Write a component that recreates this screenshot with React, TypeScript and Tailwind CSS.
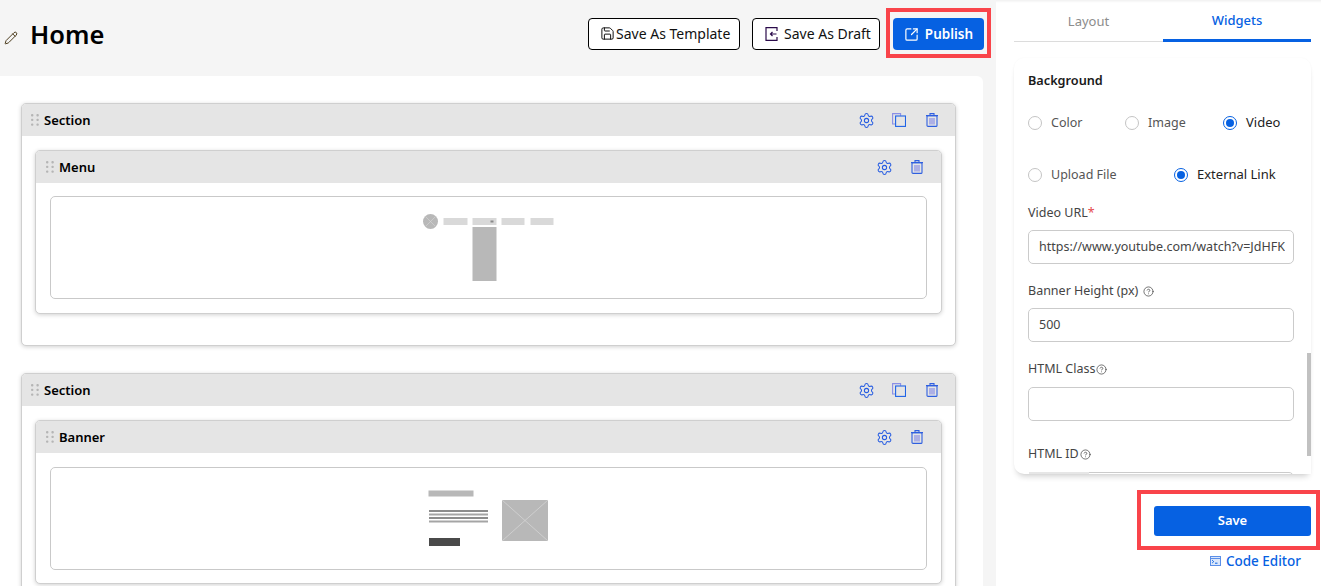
import type { ReactNode } from "react";
import { CircleHelp, Pencil, Save, Settings, SquareArrowOutUpRight } from "lucide-react";

function DragHandle() {
  return (
    <svg viewBox="0 0 8 12" className="h-3 w-2 shrink-0" fill="#b5b5b5">
      <rect x="0" y="0" width="2.4" height="2.4" rx="1" />
      <rect x="5.4" y="0" width="2.4" height="2.4" rx="1" />
      <rect x="0" y="4.7" width="2.4" height="2.4" rx="1" />
      <rect x="5.4" y="4.7" width="2.4" height="2.4" rx="1" />
      <rect x="0" y="9.4" width="2.4" height="2.4" rx="1" />
      <rect x="5.4" y="9.4" width="2.4" height="2.4" rx="1" />
    </svg>
  );
}

function TrashIcon() {
  return (
    <svg viewBox="0 0 12 14" className="h-[14px] w-[12px]" fill="none" stroke="#2f5fe0" strokeWidth="1.1">
      <path d="M0 2.6h12M4 2.4V.6h4v1.8" />
      <rect x="1" y="2.6" width="10" height="10.8" rx="1" />
      <path d="M4 5v6.5M6 5v6.5M8 5v6.5" stroke="#7f84e6" />
    </svg>
  );
}

function CopyIcon() {
  return (
    <svg viewBox="0 0 14 14" className="h-[14px] w-[14px]" fill="none">
      <path d="M3 11H.6V.6h8v2.2" stroke="#8a8fe6" strokeWidth="1.1" />
      <rect x="3.6" y="3" width="9.9" height="10.4" stroke="#1f63e6" strokeWidth="1.1" />
    </svg>
  );
}

function DraftIcon() {
  return (
    <svg viewBox="0 0 13 14" className="h-[14px] w-[13px]" fill="none" stroke="#2a0a4a" strokeWidth="1.2">
      <path d="M12 4V.7H1v12.6h11V10" />
      <path d="M11.5 7H5.5M7.5 5 5.5 7l2 2" />
    </svg>
  );
}

function CodeIcon() {
  return (
    <svg viewBox="0 0 11 10" className="h-[10px] w-[11px]" fill="none" stroke="#5b8fe8" strokeWidth="1">
      <rect x="0.5" y="0.5" width="10" height="9" fill="#dbe7fb" />
      <path d="M.5 2.5h10" />
      <path d="M2.2 4.2 3.7 5.6 2.2 7M5 7.2h2.5" stroke="#0661e2" />
    </svg>
  );
}

function MenuPlaceholder() {
  return (
    <svg viewBox="0 0 131 67" className="h-[67px] w-[131px]">
      <circle cx="7.5" cy="7.5" r="7.5" fill="#b8b8b8" />
      <path d="M2.5 2.5 12.5 12.5M12.5 2.5 2.5 12.5" stroke="#d8d8d8" strokeWidth="0.6" />
      <rect x="20.5" y="4" width="24" height="7" fill="#d9d9d9" />
      <rect x="49.5" y="4" width="24" height="7" fill="#d9d9d9" />
      <rect x="67.5" y="6.5" width="3" height="2" fill="#8a8a8a" />
      <rect x="78.5" y="4" width="23" height="7" fill="#d9d9d9" />
      <rect x="107.5" y="4" width="23" height="7" fill="#d9d9d9" />
      <rect x="49.5" y="13" width="24" height="54" fill="#b8b8b8" />
    </svg>
  );
}

function BannerPlaceholder() {
  return (
    <svg viewBox="0 0 121 57" className="h-[57px] w-[121px]">
      <rect x="0.5" y="0.5" width="45" height="6" fill="#b8b8b8" />
      <rect x="1" y="20" width="59" height="2" fill="#8c8c8c" />
      <rect x="1" y="23.5" width="59" height="2" fill="#a5a5a5" />
      <rect x="1" y="27" width="59" height="2" fill="#8c8c8c" />
      <rect x="1" y="30.5" width="59" height="2" fill="#a5a5a5" />
      <rect x="1" y="48" width="31" height="8" fill="#4a4a4a" />
      <rect x="74" y="10" width="46" height="41" fill="#b8b8b8" />
      <path d="M74 10 120 51M120 10 74 51" stroke="#d8d8d8" strokeWidth="0.7" />
    </svg>
  );
}

function Card({
  title,
  nested,
  canCopy,
  children,
}: {
  title: string;
  nested?: boolean;
  canCopy?: boolean;
  children: ReactNode;
}) {
  return (
    <div className="overflow-hidden rounded-[5px] border border-[#cfcfcf] bg-white shadow-[0_1px_4px_rgba(0,0,0,0.18)]">
      <div className="flex h-8 items-center bg-[#e5e5e5]">
        <div className={`flex min-w-0 flex-1 items-center gap-[5px] ${nested ? "pl-[10px]" : "pl-[9px]"}`}>
          <DragHandle />
          <span className="pt-[2px] text-[13px] font-semibold text-black">{title}</span>
        </div>
        <div className={`flex items-center ${nested ? "pr-[18px]" : "pr-[17px]"}`}>
          <Settings className={`h-[17px] w-[17px] text-[#2a5fe2] ${nested ? "mr-[18px]" : "mr-[17px]"}`} strokeWidth={1.5} />
          {canCopy ? (
            <span className="mr-5">
              <CopyIcon />
            </span>
          ) : null}
          <TrashIcon />
        </div>
      </div>
      {children}
    </div>
  );
}

function Widget({ title, loose, children }: { title: string; loose?: boolean; children: ReactNode }) {
  return (
    <Card title={title} nested>
      <div className={`px-[14px] ${loose ? "pb-[13px] pt-[14px]" : "pb-[14px] pt-[13px]"}`}>
        <div className="flex h-[103px] items-center justify-center rounded-[5px] border border-[#c9c9c9] bg-white">
          {children}
        </div>
      </div>
    </Card>
  );
}

function Radio({ label, checked }: { label: string; checked?: boolean }) {
  return (
    <span className="flex items-center gap-[9px]">
      <span
        className={`flex h-[14px] w-[14px] items-center justify-center rounded-full border bg-white ${
          checked ? "border-[#0661e2]" : "border-[#c4c4c4]"
        }`}
      >
        {checked ? <span className="h-2 w-2 rounded-full bg-[#0661e2]" /> : null}
      </span>
      <span className={checked ? "text-[13px] text-[#222]" : "text-[12.5px] text-[#555]"}>{label}</span>
    </span>
  );
}

function Field({
  label,
  value,
  help,
  gap,
  required,
  wide,
}: {
  label: string;
  value?: string;
  help?: boolean;
  gap?: boolean;
  required?: boolean;
  wide?: boolean;
}) {
  return (
    <div className="h-[78px] pt-px">
      <div className={`flex h-[18px] items-center text-[12.5px] leading-[18px] text-[#444] ${gap ? "gap-[5px]" : "gap-px"}`}>
        <span>
          {label}
          {required ? <span className="text-[#e5484d]">*</span> : null}
        </span>
        {help ? <CircleHelp className="h-[11px] w-[11px] text-[#444]" strokeWidth={1.6} /> : null}
      </div>
      <div className={`flex h-[34px] w-[266px] items-center rounded-[5px] border border-[#cbcbcb] bg-white pl-[10px] pr-2 text-[12.5px] text-[#444] ${wide ? "mt-[9px]" : "mt-2"}`}>
        <span className="block w-full overflow-hidden whitespace-nowrap">{value}</span>
      </div>
    </div>
  );
}

export default function App() {
  return (
    <div className="flex h-[586px] w-[1321px] overflow-hidden bg-white font-['Noto_Sans',sans-serif] shadow-[inset_0_3px_3px_-2px_rgba(0,0,0,0.08)]">
      <main className="h-full w-[996px] shrink-0 bg-[#f5f5f5] pr-[13px]">
        <header className="flex h-[76px] items-center pb-2">
          <Pencil className="ml-1 mt-[7px] h-[14px] w-[14px] text-[#4a3a1a]" strokeWidth={1.7} />
          <h1 className="ml-3 flex-1 pt-px text-[25.5px] font-semibold leading-none text-black">Home</h1>
          <div className="-mr-px flex items-center">
            <button type="button" className="flex h-8 w-[152px] items-center gap-px rounded-[4px] border border-black bg-white pb-px pl-[11px] text-[14px] text-[#111]">
              <Save className="h-[15px] w-[15px]" strokeWidth={1.6} />
              Save As Template
            </button>
            <button type="button" className="ml-3 flex h-8 w-[128px] items-center gap-[6px] rounded-[4px] border border-black bg-white pb-px pl-3 text-[14px] text-[#111]">
              <DraftIcon />
              Save As Draft
            </button>
            <button type="button" className="relative ml-[13px] flex h-8 w-[91px] items-center justify-center gap-[6px] rounded-[4px] bg-[#0661e2] text-[13.5px] font-semibold text-white">
              <SquareArrowOutUpRight className="h-[15px] w-[15px]" strokeWidth={1.9} />
              Publish
              <span className="absolute -bottom-2 -left-[7px] -right-[7px] -top-[10px] border-4 border-[#f9444a]" />
            </button>
          </div>
        </header>
        <div className="h-[510px] overflow-hidden rounded-tr-[6px] bg-white pl-[21px] pr-[27px] pt-[27px]">
          <div className="flex flex-col gap-[27px]">
            <Card title="Section" canCopy>
              <div className="px-[13px] pb-[31px] pt-[14px]">
                <Widget title="Menu">
                  <MenuPlaceholder />
                </Widget>
              </div>
            </Card>
            <Card title="Section" canCopy>
              <div className="px-[13px] pb-8 pt-[14px]">
                <Widget title="Banner" loose>
                  <BannerPlaceholder />
                </Widget>
              </div>
            </Card>
          </div>
        </div>
      </main>

      <aside className="flex h-full flex-1 flex-col pl-[18px] pr-[10px]">
        <div className="flex h-[42px] shrink-0">
          <div className="flex w-[149px] items-center justify-center border-b border-[#dcdcdc] pt-[2px] text-[13px] text-[#8c8c8c]">Layout</div>
          <div className="flex w-[148px] items-center justify-center border-b-[3px] border-[#0661e2] pt-[3px] text-[13px] font-medium text-[#0661e2]">Widgets</div>
        </div>
        <div className="relative mt-4 h-[416px] shrink-0 overflow-hidden rounded-t-[10px] rounded-bl-[10px] bg-white px-[14px] pt-[13px] shadow-[0_5px_6px_-3px_rgba(0,0,0,0.2),0_0_2px_rgba(0,0,0,0.04)]">
          <h2 className="text-[12.7px] font-semibold leading-[18px] text-[#1a1a1a]">Background</h2>
          <div className="mt-6 flex h-[20px] items-center">
            <span className="w-[97px]"><Radio label="Color" /></span>
            <span className="w-[98px]"><Radio label="Image" /></span>
            <Radio label="Video" checked />
          </div>
          <div className="mt-8 flex h-[20px] items-center">
            <span className="w-[146px]"><Radio label="Upload File" /></span>
            <Radio label="External Link" checked />
          </div>
          <div className="mt-[18px]">
            <Field label="Video URL" required value="https://www.youtube.com/watch?v=JdHFKkZpNxQ" />
            <Field label="Banner Height (px)" help gap value="500" />
            <Field label="HTML Class" help wide />
            <div className="mt-[7px]">
              <Field label="HTML ID" help wide />
            </div>
          </div>
          <div className="absolute left-[15px] top-[414px] h-[2px] w-[60px] bg-[#e6e6e6]" />
          <div className="absolute right-0 top-[295px] h-[103px] w-1 bg-[#c1c1c1]" />
        </div>
        <button type="button" className="relative ml-auto mt-8 flex h-[30px] w-[157px] shrink-0 items-center justify-center rounded-[3px] bg-[#0661e2] text-[13px] font-semibold text-white">
          Save
          <span className="absolute -bottom-[14px] -left-[17px] -right-[9px] -top-4 border-4 border-[#f9444a]" />
        </button>
        <div className="mt-[16px] flex items-center justify-end gap-[5px] pr-[10px] text-[13.5px] font-medium leading-[18px] text-[#0661e2]">
          <CodeIcon />
          Code Editor
        </div>
      </aside>
    </div>
  );
}
